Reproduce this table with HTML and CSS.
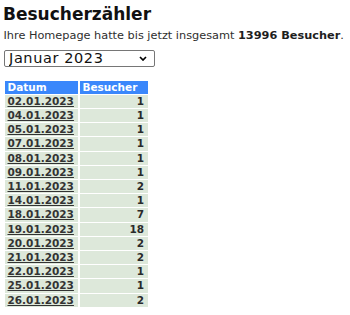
FILE: index.html
```html
<!DOCTYPE html>
<html lang="de">
<head>
<meta charset="utf-8">
<title>Besucherzähler</title>
<link rel="stylesheet" href="styles.css">
</head>
<body>
<div class="page">
  <h1 class="title">Besucherzähler</h1>
  <p class="summary">Ihre Homepage hatte bis jetzt insgesamt <b>13996 Besucher</b>.</p>
  <select class="month">
    <option>Januar 2023</option>
  </select>
  <table class="stats">
    <thead>
      <tr><th class="c-date">Datum</th><th class="c-count">Besucher</th></tr>
    </thead>
    <tbody>
      <tr><td class="c-date"><a href="#">02.01.2023</a></td><td class="c-count">1</td></tr>
      <tr><td class="c-date"><a href="#">04.01.2023</a></td><td class="c-count">1</td></tr>
      <tr><td class="c-date"><a href="#">05.01.2023</a></td><td class="c-count">1</td></tr>
      <tr><td class="c-date"><a href="#">07.01.2023</a></td><td class="c-count">1</td></tr>
      <tr><td class="c-date"><a href="#">08.01.2023</a></td><td class="c-count">1</td></tr>
      <tr><td class="c-date"><a href="#">09.01.2023</a></td><td class="c-count">1</td></tr>
      <tr><td class="c-date"><a href="#">11.01.2023</a></td><td class="c-count">2</td></tr>
      <tr><td class="c-date"><a href="#">14.01.2023</a></td><td class="c-count">1</td></tr>
      <tr><td class="c-date"><a href="#">18.01.2023</a></td><td class="c-count">7</td></tr>
      <tr><td class="c-date"><a href="#">19.01.2023</a></td><td class="c-count">18</td></tr>
      <tr><td class="c-date"><a href="#">20.01.2023</a></td><td class="c-count">2</td></tr>
      <tr><td class="c-date"><a href="#">21.01.2023</a></td><td class="c-count">2</td></tr>
      <tr><td class="c-date"><a href="#">22.01.2023</a></td><td class="c-count">1</td></tr>
      <tr><td class="c-date"><a href="#">25.01.2023</a></td><td class="c-count">1</td></tr>
      <tr><td class="c-date"><a href="#">26.01.2023</a></td><td class="c-count">2</td></tr>
    </tbody>
  </table>
</div>
</body>
</html>
```

FILE: styles.css
```css
html, body {
  margin: 0;
  padding: 0;
  background: #ffffff;
}

.page {
  padding: 4.4px 0 0 3px;
  font-family: "DejaVu Sans", "Liberation Sans", sans-serif;
  color: #222;
}

.title {
  margin: 0;
  font-size: 17px;
  font-weight: bold;
  line-height: 20px;
  color: #111;
}

.summary {
  margin: 4.2px 0 0 0.5px;
  font-size: 11.3px;
  line-height: 13px;
  color: #2e2e2e;
}

.summary b {
  color: #1e1e1e;
}

.month {
  display: block;
  margin: 8px 0 0 1px;
  width: 151px;
  height: 17px;
  padding: 0 0 0 4px;
  border: 1px solid #767676;
  border-radius: 2px;
  box-sizing: border-box;
  font-family: "DejaVu Sans", "Liberation Sans", sans-serif;
  font-size: 14.5px;
  letter-spacing: 0.6px;
  line-height: 15px;
  color: #111;
  background: #fff url("data:image/svg+xml;utf8,<svg xmlns='http://www.w3.org/2000/svg' width='8' height='5' viewBox='0 0 8 5'><path d='M1 1l3 3 3-3' fill='none' stroke='%23000' stroke-width='1.7'/></svg>") no-repeat right 7px center;
  -webkit-appearance: none;
  appearance: none;
}

.stats {
  margin: 13px 0 0 0;
  border-collapse: separate;
  border-spacing: 2px 1px;
  font-size: 10.5px;
  font-weight: bold;
  line-height: 13.2px;
}

.stats th,
.stats td {
  height: 13.2px;
  padding: 0;
  box-sizing: content-box;
}

.stats th {
  background: #3a87fb;
  color: #ffffff;
  text-align: left;
}

.stats td {
  background: #dde8da;
  color: #2a2a2a;
}

.c-date {
  width: 70.5px;
  padding-left: 2.5px !important;
}

.stats th.c-count {
  width: 65px;
  padding-left: 2.5px !important;
  padding-right: 0.5px !important;
}

.stats td.c-count {
  width: 63px;
  padding-left: 1px !important;
  padding-right: 4px !important;
  text-align: right;
}

.stats a {
  color: #333;
  text-decoration: underline;
}
```
